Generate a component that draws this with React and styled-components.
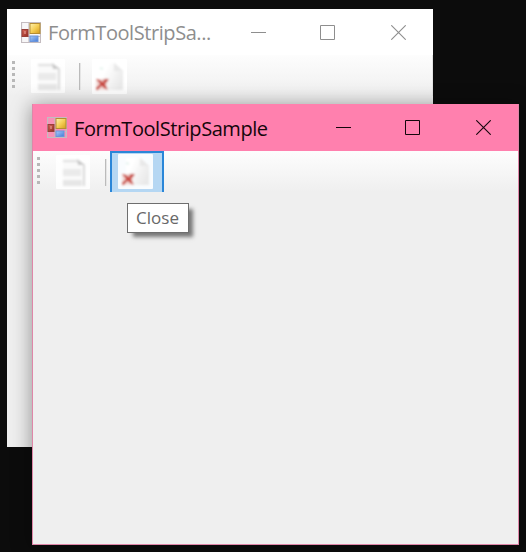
import React from "react";
import styled, { createGlobalStyle } from "styled-components";

const GlobalStyle = createGlobalStyle`
  * { box-sizing: border-box; }
  body { margin: 0; background: #0c0c0c; }
`;

const Desktop = styled.main`
  position: relative;
  width: 526px;
  height: 552px;
  overflow: hidden;
  background: #0c0c0c;
  font-family: "Open Sans", "Noto Sans", sans-serif;
`;

const Window = styled.section`
  position: absolute;
  left: ${(p) => p.$x}px;
  top: ${(p) => p.$y}px;
  width: ${(p) => p.$w}px;
  height: ${(p) => p.$h}px;
  display: flex;
  flex-direction: column;
  background: #efefef;
  box-shadow: ${(p) => (p.$active ? "0 2px 18px 1px rgba(0,0,0,.38)" : "none")};
  &::after {
    content: "";
    position: absolute;
    inset: 0;
    border: ${(p) => (p.$active ? "1px solid #df86a8" : "0")};
    border-top: 0;
    pointer-events: none;
  }
`;

const TitleBar = styled.header`
  height: ${(p) => (p.$active ? 47 : 46)}px;
  flex: none;
  display: flex;
  align-items: center;
  padding: 0 ${(p) => (p.$active ? "28px 0 15px" : "27px 0 14px")};
  background: ${(p) => (p.$active ? "#ff80ae" : "#fff")};
  color: ${(p) => (p.$active ? "#14060b" : "#8e8e8e")};
`;

const Title = styled.h1`
  margin: 0 auto 0 7px;
  padding-top: 2px;
  font-size: 20px;
  line-height: 28px;
  font-weight: 400;
  letter-spacing: -0.43px;
  white-space: nowrap;
`;

const Controls = styled.div`
  display: flex;
  gap: 54px;
  svg { display: block; }
  svg:last-child { margin-left: 2px; }
`;

const ToolStrip = styled.div`
  height: 41px;
  flex: none;
  display: flex;
  align-items: flex-start;
  padding-left: 5px;
  background: linear-gradient(#fdfdfd, #f7f7f7 45%, #efefef);
  border-right: 1px solid #e4e4e4;
`;

const Grip = styled.div`
  display: grid;
  gap: 3px;
  margin: 6px 16px 0 0;
  i { width: 3px; height: 3px; background: #b8b8b8; }
`;

const ToolButton = styled.div`
  height: 41px;
  width: ${(p) => p.$w}px;
  padding: ${(p) => p.$pad};
  background: ${(p) => (p.$hot ? "#b5d7f3" : "transparent")};
  border: ${(p) => (p.$hot ? "2px solid #2a86d8" : "0")};
  border-bottom: 0;
  svg { display: block; }
`;

const Separator = styled.div`
  width: 1px;
  height: 27px;
  margin: ${(p) => p.$margin};
  background: #bbb;
  box-shadow: 1px 0 #e5e5e5;
`;

const Tooltip = styled.div`
  position: absolute;
  left: 127px;
  top: 203px;
  width: 62px;
  height: 30px;
  padding-right: 1px;
  border: 1px solid #6e6e6e;
  background: #fff;
  color: #686868;
  font-size: 17px;
  line-height: 27px;
  text-align: center;
  box-shadow: 5px 5px 4px -1px rgba(0,0,0,.5);
`;

const AppIcon = () => (
  <svg width="20" height="21" viewBox="0 0 20 21">
    <defs>
      <linearGradient id="gold" x2="1" y2="1"><stop stopColor="#fff3b0" /><stop offset=".5" stopColor="#f5ce55" /><stop offset="1" stopColor="#d39b1d" /></linearGradient>
      <linearGradient id="red" x2="1" y2="1"><stop stopColor="#d9695c" /><stop offset="1" stopColor="#92291f" /></linearGradient>
      <linearGradient id="blue" x2="1" y2="1"><stop stopColor="#a9ccfb" /><stop offset="1" stopColor="#457bd6" /></linearGradient>
    </defs>
    <path d="M.5.5H19.5V20.5H.5Z M.5 14.5H19.5 M8 .5V20.5" fill="#ded9db" fillOpacity=".2" stroke="#c4bcc0" strokeWidth="1.2" />
    <rect x="9" y="1.5" width="10" height="10" fill="url(#gold)" stroke="#b58d33" />
    <rect x="1" y="7.5" width="6" height="7" fill="url(#red)" stroke="#973f38" />
    <path d="M4 9v3" stroke="#efaaa2" />
    <rect x="9" y="14" width="8" height="5.5" fill="url(#blue)" stroke="#6994da" />
  </svg>
);

const DocumentIcon = () => (
  <svg width="34" height="34" viewBox="0 0 34 34">
    <defs><filter id="docSoft"><feGaussianBlur stdDeviation="1" /></filter></defs>
    <rect width="34" height="34" rx="1" fill="#fff" fillOpacity=".85" />
    <g filter="url(#docSoft)">
      <path d="M7 5H22L29 10V31H7Z" fill="#fafafa" />
      <path d="M7 6H22" stroke="#e2e2e2" strokeWidth="2.4" />
      <path d="M21 4L29 10H22Z" fill="#c8c8c8" />
      <path d="M7 14H25V21H7Z" fill="#eaeaea" />
      <path d="M7 25H26V31H7Z" fill="#e6e6e6" />
      <path d="M28 10V31" stroke="#dadada" strokeWidth="2" />
    </g>
  </svg>
);

const CloseDocumentIcon = () => (
  <svg width="35" height="35" viewBox="0 0 35 35">
    <defs>
      <filter id="closeSoft"><feGaussianBlur stdDeviation=".8" /></filter>
      <linearGradient id="page" x2="1" y2=".6"><stop offset=".3" stopColor="#fff" /><stop offset="1" stopColor="#e9e9e9" /></linearGradient>
    </defs>
    <rect width="35" height="35" rx="1" fill="#fff" fillOpacity=".92" />
    <g filter="url(#closeSoft)">
      <path d="M8 4H23L31 12V31H8Z" fill="url(#page)" />
      <path d="M22 4L31 12H22Z" fill="#e8e8e8" />
      <path d="M8 9L11 10" stroke="#e5f4ef" strokeWidth="2" />
      <path d="M4 20H16L14 31H4Z" fill="#f4dedb" />
      <path d="M4 20L8 21L11 23L14 19.5L17 20.5L13 25L16 31L12 29L9.5 27L5 31.5L4 29L8 25Z" fill="#ca4c45" />
      <path d="M11 21H16" stroke="#c75851" strokeWidth="1.2" />
    </g>
  </svg>
);

const WindowControls = () => (
  <Controls>
    <svg width="15" height="15" viewBox="0 0 15 15"><path d="M0 7.5H15" stroke="currentColor" /></svg>
    <svg width="15" height="15" viewBox="0 0 15 15"><path d="M.5.5H14.5V14.5H.5Z" fill="none" stroke="currentColor" /></svg>
    <svg width="15" height="15" viewBox="0 0 15 15"><path d="M.3.3L14.7 14.7M14.7.3L.3 14.7" stroke="currentColor" strokeWidth="1.1" /></svg>
  </Controls>
);

function ToolStripWindow({ x, y, w, h, active, title }) {
  return (
    <Window $x={x} $y={y} $w={w} $h={h} $active={active}>
      <TitleBar $active={active}>
        <AppIcon />
        <Title>{title}</Title>
        <WindowControls />
      </TitleBar>
      <ToolStrip>
        <Grip>{[0, 1, 2, 3, 4].map((n) => <i key={n} />)}</Grip>
        <ToolButton $w={34} $pad="4px 0 0"><DocumentIcon /></ToolButton>
        <Separator $margin={active ? "8px 4px 0 15px" : "8px 4px 0 14px"} />
        <ToolButton $w={54} $hot={active} $pad={active ? "1px 0 0 6px" : "4px 0 0 8px"}><CloseDocumentIcon /></ToolButton>
      </ToolStrip>
    </Window>
  );
}

export default function App() {
  return (
    <>
      <GlobalStyle />
      <Desktop>
        <ToolStripWindow x={7} y={9} w={426} h={438} title="FormToolStripSa..." />
        <ToolStripWindow x={32} y={104} w={487} h={441} active title="FormToolStripSample" />
        <Tooltip>Close</Tooltip>
      </Desktop>
    </>
  );
}
